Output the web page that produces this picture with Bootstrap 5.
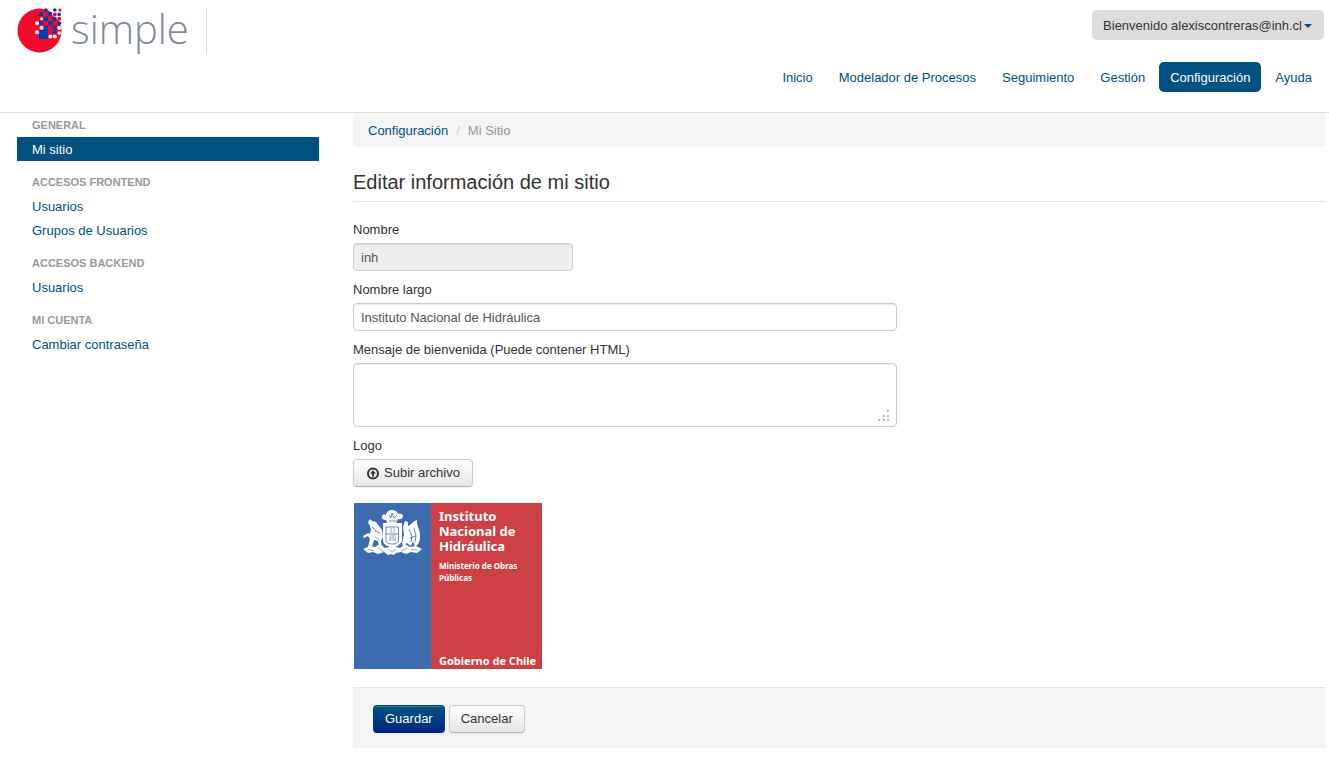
<!DOCTYPE html>
<html lang="es">
<head>
<meta charset="utf-8">
<meta name="viewport" content="width=device-width, initial-scale=1">
<title>Simple - Mi Sitio</title>
<link href="https://cdn.jsdelivr.net/npm/bootstrap@5.3.0/dist/css/bootstrap.min.css" rel="stylesheet">
<style>
  body { font: 13px/20px "Liberation Sans", Arial, sans-serif; color: #333; background: #fff; }
  a { color: #005080; text-decoration: none; }
  .site-header { border-bottom: 1px solid #ddd; padding: 8px 5px 20px 17px; }
  .brand-box { border-right: 1px solid #ddd; width: 190px; height: 46px; color: #808a9a; }
  .user-btn { background: #ddd; color: #333; font-size: 13px; line-height: 20px; padding: 6px 12px 4px 11px; margin-top: 2px; border: 0; border-radius: 5px; }
  .user-btn::after { color: #005080; border-top-width: 4px; border-left-width: 4px; border-right-width: 4px; margin-left: 2px; vertical-align: 2px; }
  .main-nav { --bs-nav-pills-link-active-bg: #005080; --bs-nav-pills-border-radius: 5px; gap: 2px; margin-top: 22px; }
  .main-nav .nav-link { color: #005080; font-size: 13px; padding: 6px 12px 4px; }
  .main-nav .nav-link.active { color: #fff; padding-left: 11px; padding-right: 11px; }
  .page-grid { display: grid; grid-template-columns: minmax(0, 302fr) minmax(0, 973fr); column-gap: 34px; padding: 0 3px 9px 17px; }
  .side-title { font-size: 11px; font-weight: 700; color: #999; text-transform: uppercase; padding: 2px 15px; margin: 0; line-height: 20px; }
  .side-group { margin-bottom: 9px; }
  .side-nav .nav-link { color: #005080; font-size: 13px; padding: 3px 15px 1px; }
  .side-nav .nav-link.active { background: #005080; color: #fff; }
  .crumbs { --bs-breadcrumb-item-padding-x: 8px; --bs-breadcrumb-divider-color: #ccc; --bs-breadcrumb-item-active-color: #999; font-size: 13px; background: #f5f5f5; border-radius: 4px; padding: 8px 15px 6px; margin-bottom: 17px; }
  .form-title { font-size: 20px; line-height: 37px; font-weight: 400; border-bottom: 1px solid #e5e5e5; margin-bottom: 18px; }
  .form-label { margin-bottom: 3px; display: block; }
  .form-control { font-size: 13px; line-height: 20px; color: #555; padding: 4px 7px 2px; border-color: #ccc; border-radius: 4px; margin-bottom: 9px; box-shadow: inset 0 1px 1px rgba(0,0,0,.075); }
  .form-control:disabled { background: #eee; }
  .field-short { width: 220px; }
  .field-long { max-width: 544px; }
  textarea.form-control { height: 64px; resize: none; }
  .grip { position: absolute; right: 7px; bottom: 5px; pointer-events: none; }
  .btn-soft, .btn-save { font-size: 13px; line-height: 20px; padding: 3px 12px; border-radius: 4px; box-shadow: inset 0 1px 0 rgba(255,255,255,.2), 0 1px 2px rgba(0,0,0,.05); }
  .btn-soft { color: #333; background: linear-gradient(#fff, #e6e6e6); border-color: #ccc #ccc #b3b3b3; }
  .btn-save { color: #fff; background: linear-gradient(#005580, #002580); border-color: #00407c #00407c #002078; }
  .gob-logo { width: 188px; height: 166px; margin: 16px 0 18px 1px; color: #fff; background: #cd4144; font-family: "Noto Sans", sans-serif; font-weight: 700; }
  .gob-blue { width: 77px; background: #3d6bb0; padding: 7px 0 0 8px; }
  .gob-text { padding: 6px 0 0 8px; }
  .gob-name { font-size: 13px; line-height: 15px; }
  .gob-min { font-size: 8px; line-height: 12px; margin-top: 6px; }
  .gob-foot { font-size: 11px; line-height: 16px; }
  .actions { background: #f5f5f5; border-top: 1px solid #e5e5e5; padding: 17px 20px 15px; gap: 4px; }
  .actions .btn { padding-left: 11px; padding-right: 11px; }
</style>
</head>
<body>
<header class="site-header d-flex justify-content-between align-items-start">
  <a class="brand-box d-block flex-shrink-0" href="#" aria-label="simple">
    <svg class="d-block overflow-visible" width="172" height="46" viewBox="17 8 172 46">
      <circle cx="39.500" cy="30.500" r="22" fill="#f00a2c"/>
      <path fill="#fff" d="M52 8h14v18h-5l-2-5-7-6z"/>
      <g fill="#0a3ba8">
        <rect x="39" y="30" width="9" height="9"/>
        <rect x="39" y="12" width="4" height="4"/><rect x="39" y="21" width="4" height="4"/>
        <rect x="43.500" y="16.500" width="4.500" height="4.500"/><rect x="43.500" y="25.500" width="4.500" height="4.500"/>
        <rect x="48" y="12" width="4" height="4"/><rect x="48" y="21" width="4.500" height="4.500"/>
        <rect x="52.500" y="25.500" width="4" height="4"/><rect x="52.500" y="17" width="4" height="4"/>
        <circle cx="46" cy="10" r="1.800"/><circle cx="54.800" cy="10" r="1.800"/>
        <circle cx="59.200" cy="14.400" r="1.800"/><circle cx="59.200" cy="23.200" r="2"/>
        <circle cx="54.800" cy="32" r="2"/>
      </g>
      <g fill="#f00a2c">
        <circle cx="54.800" cy="14.400" r="2"/><circle cx="60" cy="10" r="1.600"/>
        <circle cx="59.200" cy="18.800" r="2"/><circle cx="54.800" cy="23.200" r="2"/>
      </g>
      <g fill="#fff">
        <circle cx="37" cy="23.200" r="2"/><circle cx="37" cy="32.300" r="2"/>
        <circle cx="41.500" cy="27.700" r="2"/><circle cx="50.400" cy="36.400" r="2"/>
        <circle cx="50.400" cy="10" r="1.600"/><circle cx="41.500" cy="18.800" r="1.600"/>
        <circle cx="59.200" cy="28" r="2"/><circle cx="54.800" cy="36.400" r="2"/>
        <circle cx="59.200" cy="33" r="1.700"/>
      </g>
      <text x="71" y="44" fill="#808a9a" font-family="'Open Sans', sans-serif" font-weight="300" font-size="40">simple</text>
    </svg>
  </a>
  <div class="d-flex flex-column align-items-end">
    <div class="dropdown">
      <button class="btn user-btn dropdown-toggle" type="button" data-bs-toggle="dropdown">Bienvenido alexiscontreras@inh.cl</button>
    </div>
    <nav class="nav nav-pills main-nav">
      <a class="nav-link" href="#">Inicio</a>
      <a class="nav-link" href="#">Modelador de Procesos</a>
      <a class="nav-link" href="#">Seguimiento</a>
      <a class="nav-link" href="#">Gestión</a>
      <a class="nav-link active" aria-current="page" href="#">Configuración</a>
      <a class="nav-link" href="#">Ayuda</a>
    </nav>
  </div>
</header>

<div class="page-grid">
  <aside class="side-nav">
    <div class="side-group">
      <h2 class="side-title">General</h2>
      <nav class="nav flex-column"><a class="nav-link active" href="#">Mi sitio</a></nav>
    </div>
    <div class="side-group">
      <h2 class="side-title">Accesos Frontend</h2>
      <nav class="nav flex-column"><a class="nav-link" href="#">Usuarios</a><a class="nav-link" href="#">Grupos de Usuarios</a></nav>
    </div>
    <div class="side-group">
      <h2 class="side-title">Accesos Backend</h2>
      <nav class="nav flex-column"><a class="nav-link" href="#">Usuarios</a></nav>
    </div>
    <div class="side-group">
      <h2 class="side-title">Mi cuenta</h2>
      <nav class="nav flex-column"><a class="nav-link" href="#">Cambiar contraseña</a></nav>
    </div>
  </aside>

  <main>
    <ol class="breadcrumb crumbs">
      <li class="breadcrumb-item"><a href="#">Configuración</a></li>
      <li class="breadcrumb-item active" aria-current="page">Mi Sitio</li>
    </ol>
    <form>
      <h1 class="form-title">Editar información de mi sitio</h1>
      <label class="form-label" for="nombre">Nombre</label>
      <input class="form-control field-short" id="nombre" type="text" value="inh" disabled>
      <label class="form-label" for="largo">Nombre largo</label>
      <input class="form-control field-long" id="largo" type="text" value="Instituto Nacional de Hidráulica">
      <label class="form-label" for="mensaje">Mensaje de bienvenida (Puede contener HTML)</label>
      <div class="position-relative field-long">
        <textarea class="form-control" id="mensaje"></textarea>
        <svg class="grip" width="12" height="12" fill="#bbb"><path d="M9 0h2v2H9zM5 5h2v2H5zM9 5h2v2H9zM0 9h2v2H0zM5 9h2v2H5zM9 9h2v2H9z"/></svg>
      </div>
      <label class="form-label" for="subir">Logo</label>
      <button class="btn btn-soft d-flex align-items-center gap-1" id="subir" type="button">
        <svg width="14" height="14" viewBox="0 0 14 14"><circle cx="7" cy="7.500" r="5" fill="none" stroke="#333" stroke-width="2"/><path fill="#333" d="M7 4.200l3 3.300H8v3H6v-3H4z"/></svg>
        Subir archivo
      </button>

      <div class="gob-logo d-flex">
        <div class="gob-blue flex-shrink-0">
          <svg class="d-block" width="61" height="46" viewBox="0 0 61 46" fill="#fff">
            <path d="M24 10c-3 0-5-2-4-4 1-2 3-2 4-1 0-3 3-5 6-5s5 1 6 4c2-1 5 0 5 2s-2 4-5 3l-2 5h-8z"/>
            <path d="M21 13h19v17c0 5-5 7-9.500 7S21 35 21 30z"/>
            <path d="M6 12l2-3 2 2 4 1 3 4 3 4 1 7-2 4 1 6h-3l-1-6-4-1-2 7H6l2-8-2-3-4 2-1-2 5-3 2 1 1-5z"/>
            <path d="M43 11l3 1v4c2 0 4-4 9-6-1 6 4 10 3 17 0 5-2 8-5 10l-2-6-2 5-4-3-4 3-1-4 2-7-1-8z"/>
            <path d="M1 39l7-3 5 1 5-3 5 4 8-2 7 2 5-4 5 3 6-1 6 3-5 4-6-1-5 2-5-2-5 1-2 2-3-1-3 1-4-3-6 2-5-2-5 1z"/>
            <path fill="none" stroke="#3d6bb0" stroke-width=".8" d="M24 17v13c0 3 3 4 6.500 4s6-1 6-4V17zM24 24h12.500M27 5l2 3 1-5 2 5 3-3M18 23l-5-2M10 17l4 4M47 19l3 7-1 6M52 18l2 8-1 6M48 28l6-2M27 11h8M20 32l4 4M41 31l-5 5"/>
            <path fill="none" stroke="#8ea9d4" d="M29 18v5M32 18v5M27 26h7M27 28h7M27 30h7M6 39l6 2M16 38l6 4M26 39l4 3 4-3M39 41l6-3M49 39l6 1M13 27l4 3"/>
          </svg>
        </div>
        <div class="gob-text d-flex flex-column flex-grow-1 text-nowrap">
          <div class="gob-name">Instituto<br>Nacional de<br>Hidráulica</div>
          <div class="gob-min">Ministerio de Obras<br>Públicas</div>
          <div class="gob-foot mt-auto">Gobierno de Chile</div>
        </div>
      </div>

      <div class="actions d-flex">
        <button class="btn btn-save" type="submit">Guardar</button>
        <button class="btn btn-soft" type="button">Cancelar</button>
      </div>
    </form>
  </main>
</div>
<script src="https://cdn.jsdelivr.net/npm/bootstrap@5.3.0/dist/js/bootstrap.bundle.min.js"></script>
</body>
</html>
